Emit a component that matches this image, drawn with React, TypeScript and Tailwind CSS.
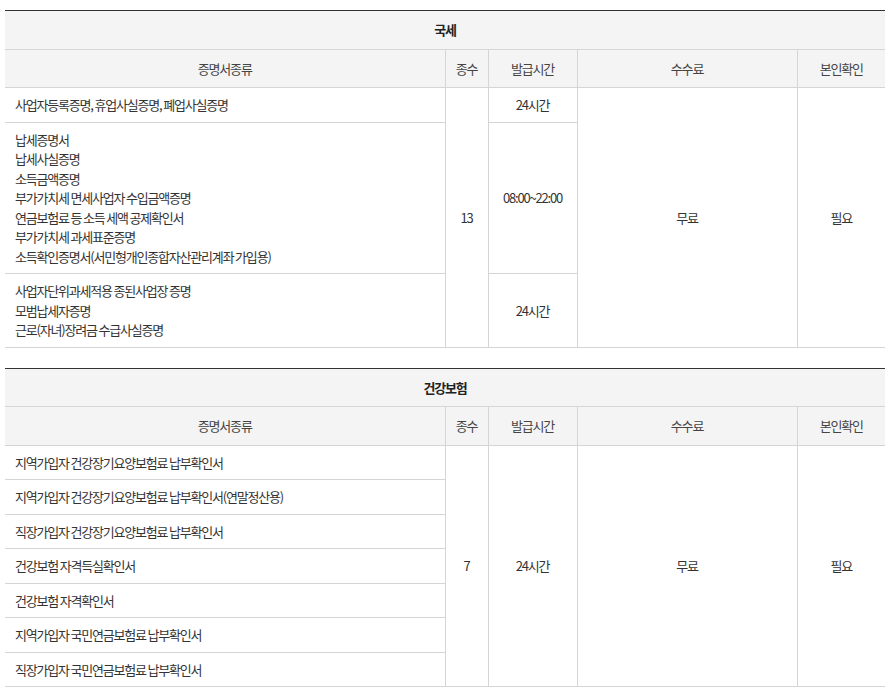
import React from 'react'

type Section = {
    title: string
    count: string
    fee: string
    auth: string
    rows: { docs: string[]; time?: string }[]
    sharedTime?: string
}

const sections: Section[] = [
    {
        title: '국세',
        count: '13',
        fee: '무료',
        auth: '필요',
        rows: [
            { docs: ['사업자등록증명, 휴업사실증명, 폐업사실증명'], time: '24시간' },
            {
                docs: [
                    '납세증명서',
                    '납세사실증명',
                    '소득금액증명',
                    '부가가치세 면세사업자 수입금액증명',
                    '연금보험료 등 소득 세액 공제확인서',
                    '부가가치세 과세표준증명',
                    '소득확인증명서(서민형개인종합자산관리계좌 가입용)',
                ],
                time: '08:00~22:00',
            },
            {
                docs: ['사업자단위과세적용 종된사업장 증명', '모범납세자증명', '근로(자녀)장려금 수급사실증명'],
                time: '24시간',
            },
        ],
    },
    {
        title: '건강보험',
        count: '7',
        fee: '무료',
        auth: '필요',
        sharedTime: '24시간',
        rows: [
            { docs: ['지역가입자 건강장기요양보험료 납부확인서'] },
            { docs: ['지역가입자 건강장기요양보험료 납부확인서(연말정산용)'] },
            { docs: ['직장가입자 건강장기요양보험료 납부확인서'] },
            { docs: ['건강보험 자격득실확인서'] },
            { docs: ['건강보험 자격확인서'] },
            { docs: ['지역가입자 국민연금보험료 납부확인서'] },
            { docs: ['직장가입자 국민연금보험료 납부확인서'] },
        ],
    },
]

const cell = 'border border-[#d5d5d5] py-[7px] leading-[19.5px] text-center align-middle'
const head = 'border border-[#d5d5d5] bg-[#f4f4f4] py-[9px] leading-[19.5px] font-normal text-center'

function CertTable({ s }: { s: Section }) {
    const n = s.rows.length
    return (
        <table className="w-[880px] table-fixed border-collapse border-t border-b border-t-[#333] border-b-[#333]">
            <colgroup>
                <col className="w-[440px]" />
                <col className="w-[43px]" />
                <col className="w-[89px]" />
                <col className="w-[220px]" />
                <col className="w-[88px]" />
            </colgroup>
            <thead>
                <tr>
                    <th colSpan={5} className="border-b border-[#d5d5d5] bg-[#f4f4f4] py-[9px] leading-[19.5px] font-bold text-[#222]">
                        {s.title}
                    </th>
                </tr>
                <tr className="text-[#444]">
                    <th className={`${head} border-l-0`}>증명서종류</th>
                    <th className={head}>종수</th>
                    <th className={head}>발급시간</th>
                    <th className={head}>수수료</th>
                    <th className={`${head} border-r-0`}>본인확인</th>
                </tr>
            </thead>
            <tbody>
                {s.rows.map((r, i) => (
                    <tr key={i}>
                        <td className="border border-l-0 border-[#d5d5d5] py-[7px] pl-[10px] leading-[19.5px] text-left">
                            {r.docs.map((d) => (
                                <div key={d}>{d}</div>
                            ))}
                        </td>
                        {i === 0 && (
                            <td rowSpan={n} className={cell}>
                                {s.count}
                            </td>
                        )}
                        {r.time && <td className={cell}>{r.time}</td>}
                        {i === 0 && s.sharedTime && (
                            <td rowSpan={n} className={cell}>
                                {s.sharedTime}
                            </td>
                        )}
                        {i === 0 && (
                            <td rowSpan={n} className={cell}>
                                {s.fee}
                            </td>
                        )}
                        {i === 0 && (
                            <td rowSpan={n} className={`${cell} border-r-0`}>
                                {s.auth}
                            </td>
                        )}
                    </tr>
                ))}
            </tbody>
        </table>
    )
}

export default function App() {
    return (
        <div className="min-h-[697px] bg-white pt-[10px] pl-[5px] font-['Noto_Sans_CJK_KR',sans-serif] text-[13px] tracking-[-1.2px] text-[#333]">
            <div className="flex flex-col gap-[20px]">
                {sections.map((s) => (
                    <CertTable key={s.title} s={s} />
                ))}
            </div>
        </div>
    )
}
